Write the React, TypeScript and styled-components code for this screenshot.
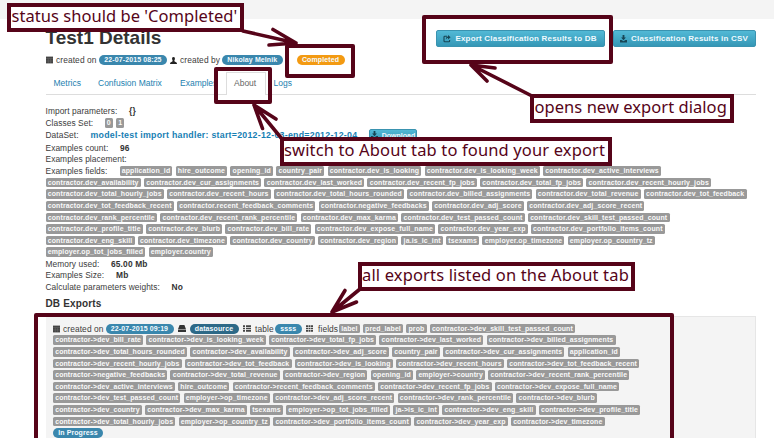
import React from "react";
import styled, { createGlobalStyle } from "styled-components";

const wine = "#560419";

const Global = createGlobalStyle`
  * { box-sizing: border-box; }
  html, body { margin: 0; background: #fff; }
  body { font-family: "Liberation Sans", Arial, sans-serif; font-size: 8.4px; color: #3c3c3c; overflow: hidden; }
`;

const Page = styled.div`
  position: relative;
  width: 774px;
  height: 438px;
  overflow: hidden;
  display: flex;
  flex-direction: column;
`;
const TopBand = styled.div`
  height: 19px;
  flex: none;
  background: #f4f4f4;
`;
const Content = styled.main`
  flex: 1;
  display: flex;
  flex-direction: column;
  padding: 0 18.5px 0 45.5px;
`;
const Header = styled.header`
  height: 33px;
  flex: none;
  display: flex;
  justify-content: space-between;
  align-items: flex-start;
`;
const Title = styled.h1`
  margin: 7.5px 0 0;
  font-size: 19px;
  line-height: 21px;
  font-weight: bold;
  color: #333;
`;
const Actions = styled.div`
  display: flex;
  gap: 8px;
  padding-top: 11px;
`;
const Button = styled.button<{ $w: number; $h?: number; $size?: number; $ls?: number }>`
  display: flex;
  align-items: center;
  justify-content: center;
  gap: 4px;
  flex: none;
  width: ${(p) => p.$w}px;
  height: ${(p) => p.$h ?? 17}px;
  padding: 0;
  border: 1px solid #3a93b0;
  border-radius: 2px;
  background: linear-gradient(#52b9d6, #3597b6);
  color: #effaff;
  font: bold ${(p) => p.$size ?? 8}px "Liberation Sans", Arial, sans-serif;
  letter-spacing: ${(p) => p.$ls ?? 0.2}px;
  white-space: nowrap;
`;
const Meta = styled.div<{ $h: number }>`
  display: flex;
  align-items: center;
  height: ${(p) => p.$h}px;
  flex: none;
  white-space: nowrap;
`;
const MetaText = styled.span<{ $w: number; $ls?: number }>`
  width: ${(p) => p.$w}px;
  flex: none;
  letter-spacing: ${(p) => p.$ls ?? 0.1}px;
`;
const Slot = styled.span<{ $w: number }>`
  width: ${(p) => p.$w}px;
  flex: none;
  display: flex;
  align-items: center;
  justify-content: center;
`;
const Pill = styled.span<{ $w: number; $bg?: string; $ml?: number; $ls?: number }>`
  width: ${(p) => p.$w}px;
  height: 10px;
  flex: none;
  margin-left: ${(p) => p.$ml ?? 0}px;
  border-radius: 5px;
  background: ${(p) => p.$bg ?? "#3a87ad"};
  color: #f4fbff;
  font-size: 7px;
  font-weight: bold;
  line-height: 10px;
  text-align: center;
  letter-spacing: ${(p) => p.$ls ?? 0.1}px;
  white-space: nowrap;
`;
const Tabs = styled.nav`
  display: flex;
  flex: none;
  height: 27px;
  padding-top: 4px;
  border-bottom: 1px solid #ddd;
  font-size: 8.5px;
`;
const Tab = styled.a<{ $w: number; $active?: boolean }>`
  width: ${(p) => p.$w}px;
  height: ${(p) => (p.$active ? 23 : 22)}px;
  flex: none;
  line-height: ${(p) => (p.$active ? 20 : 22)}px;
  padding-left: ${(p) => (p.$active ? 7 : 8)}px;
  color: ${(p) => (p.$active ? "#666" : "#1c7fb0")};
  border: solid #ddd;
  border-width: ${(p) => (p.$active ? "1px 1px 0" : "0")};
  background: #fff;
  white-space: nowrap;
`;
const Params = styled.section`
  display: flex;
  flex-direction: column;
  padding-top: 10.5px;
  flex: none;
`;
const Param = styled.div<{ $h?: number }>`
  display: flex;
  align-items: center;
  height: ${(p) => p.$h ?? 11.6}px;
  white-space: nowrap;
`;
const ParamName = styled.span<{ $w: number }>`
  width: ${(p) => p.$w}px;
  flex: none;
  letter-spacing: 0.06px;
`;
const Value = styled.b`
  color: #333;
  letter-spacing: 0.15px;
`;
const DataLink = styled.a`
  width: 278.5px;
  flex: none;
  color: #1780b4;
  font-size: 8.8px;
  font-weight: bold;
  letter-spacing: 0.26px;
`;
const TagRow = styled.div<{ $ls: number }>`
  display: flex;
  align-items: center;
  gap: 3.2px;
  height: 11.6px;
  letter-spacing: ${(p) => p.$ls}px;
`;
const Tag = styled.span`
  height: 9.6px;
  padding: 0 2.2px;
  border-radius: 1.5px;
  background: #999;
  color: #fafafa;
  font-size: 6.95px;
  font-weight: bold;
  line-height: 9.4px;
  white-space: nowrap;
`;
const SectionTitle = styled.h2`
  margin: 0;
  height: 23px;
  flex: none;
  padding-top: 5px;
  font-size: 10px;
  line-height: 12px;
  letter-spacing: 0.15px;
  color: #333;
`;
const Panel = styled.section`
  flex: 1;
  padding: 6px 6.5px 0;
  background: #f4f4f4;
  border: 1px solid #e6e6e6;
  border-left-color: #f4f4f4;
  border-bottom: 0;
`;

const Callout = styled.div<{ $x: number; $y: number; $w: number; $h: number; $ls?: number }>`
  position: absolute;
  left: ${(p) => p.$x}px;
  top: ${(p) => p.$y}px;
  width: ${(p) => p.$w}px;
  height: ${(p) => p.$h}px;
  padding-left: 0.5px;
  border: 4px solid ${wine};
  background: #fff;
  color: ${wine};
  font: 16.5px "Noto Sans", "Open Sans", sans-serif;
  line-height: 18px;
  letter-spacing: ${(p) => p.$ls ?? 0}px;
  white-space: nowrap;
`;
const Highlight = styled.div<{ $x: number; $y: number; $w: number; $h: number }>`
  position: absolute;
  left: ${(p) => p.$x}px;
  top: ${(p) => p.$y}px;
  width: ${(p) => p.$w}px;
  height: ${(p) => p.$h}px;
  border: 4px solid ${wine};
  border-radius: 2px;
`;
const Arrows = styled.svg`
  position: absolute;
  left: 0;
  top: 0;
  pointer-events: none;
`;

const CalendarIcon = () => (
  <svg width="7" height="8" viewBox="0 0 7 8">
    <path d="M0 .6h7v6.800H0z" fill="#444" />
    <path d="M0 2.500h7M2.300 3v4M4.600 3v4M0 5h7" stroke="#777" strokeWidth=".4" />
  </svg>
);
const UserIcon = () => (
  <svg width="7" height="7" viewBox="0 0 7 7">
    <path d="M3.5 0C4.7 0 5 .8 4.9 2c-.1.9-.5 1.3-.6 1.9.2.8 2.4.9 2.6 2.1V7H.1V6C.3 4.8 2.5 4.7 2.7 3.9 2.6 3.3 2.2 2.9 2.1 2 2 .8 2.3 0 3.5 0z" fill="#222" />
  </svg>
);
const DiskIcon = () => (
  <svg width="8" height="7" viewBox="0 0 8 7">
    <path d="M1.6 0h4.8L8 4.3H0z M0 4.8h8V7H0z" fill="#333" />
  </svg>
);
const ListIcon = () => (
  <svg width="8" height="7" viewBox="0 0 8 7">
    <path d="M0 .3h2v1.6H0zM3 .3h5v1.6H3zM0 2.7h2v1.6H0zM3 2.7h5v1.6H3zM0 5.1h2v1.6H0zM3 5.1h5v1.6H3z" fill="#444" />
  </svg>
);
const GridIcon = () => (
  <svg width="7" height="7" viewBox="0 0 7 7">
    <path d="M0 .3h2v1.6H0zM2.5.3h2v1.6h-2zM5 .3h2v1.6H5zM0 2.7h2v1.6H0zM2.5 2.7h2v1.6h-2zM5 2.7h2v1.6H5zM0 5.1h2v1.6H0zM2.5 5.1h2v1.6h-2zM5 5.1h2v1.6H5z" fill="#444" />
  </svg>
);
const ShareIcon = () => (
  <svg width="8" height="8" viewBox="0 0 8 8">
    <path d="M4 1.2H1.8Q1 1.2 1 2v4q0 .8.8.8h4q.8 0 .8-.8V5" fill="none" stroke="#174554" strokeWidth="1.1" />
    <path d="M5 0l2.6 2.2L5 4.4V3C3.900 3 3.300 3.600 2.900 4.500 2.800 2.500 3.600 1.500 5 1.400z" fill="#174554" />
  </svg>
);
const DownloadIcon = () => (
  <svg width="7" height="8" viewBox="0 0 7 8">
    <path d="M2.6 0h1.8v2.6h1.500L3.500 5.300 1.100 2.600h1.500zM0 5h1.500l2 1.300L5.500 5H7v2.500H0z" fill="#174554" />
  </svg>
);

const fieldRows = [
  "application_id hire_outcome opening_id country_pair contractor.dev_is_looking contractor.dev_is_looking_week contractor.dev_active_interviews",
  "contractor.dev_availability contractor.dev_cur_assignments contractor.dev_last_worked contractor.dev_recent_fp_jobs contractor.dev_total_fp_jobs contractor.dev_recent_hourly_jobs",
  "contractor.dev_total_hourly_jobs contractor.dev_recent_hours contractor.dev_total_hours_rounded contractor.dev_billed_assignments contractor.dev_total_revenue contractor.dev_tot_feedback",
  "contractor.dev_tot_feedback_recent contractor.recent_feedback_comments contractor.negative_feedbacks contractor.dev_adj_score contractor.dev_adj_score_recent",
  "contractor.dev_rank_percentile contractor.dev_recent_rank_percentile contractor.dev_max_karma contractor.dev_test_passed_count contractor.dev_skill_test_passed_count",
  "contractor.dev_profile_title contractor.dev_blurb contractor.dev_bill_rate contractor.dev_expose_full_name contractor.dev_year_exp contractor.dev_portfolio_items_count",
  "contractor.dev_eng_skill contractor.dev_timezone contractor.dev_country contractor.dev_region ja.is_ic_int tsexams employer.op_timezone employer.op_country_tz",
  "employer.op_tot_jobs_filled employer.country",
];

const exportRows = [
  "label pred_label prob contractor->dev_skill_test_passed_count",
  "contractor->dev_bill_rate contractor->dev_is_looking_week contractor->dev_total_fp_jobs contractor->dev_last_worked contractor->dev_billed_assignments",
  "contractor->dev_total_hours_rounded contractor->dev_availability contractor->dev_adj_score country_pair contractor->dev_cur_assignments application_id",
  "contractor->dev_recent_hourly_jobs contractor->dev_tot_feedback contractor->dev_is_looking contractor->dev_recent_hours contractor->dev_tot_feedback_recent",
  "contractor->negative_feedbacks contractor->dev_total_revenue contractor->dev_region opening_id employer->country contractor->dev_recent_rank_percentile",
  "contractor->dev_active_interviews hire_outcome contractor->recent_feedback_comments contractor->dev_recent_fp_jobs contractor->dev_expose_full_name",
  "contractor->dev_test_passed_count employer->op_timezone contractor->dev_adj_score_recent contractor->dev_rank_percentile contractor->dev_blurb",
  "contractor->dev_country contractor->dev_max_karma tsexams employer->op_tot_jobs_filled ja->is_ic_int contractor->dev_eng_skill contractor->dev_profile_title",
  "contractor->dev_total_hourly_jobs employer->op_country_tz contractor->dev_portfolio_items_count contractor->dev_year_exp contractor->dev_timezone",
];

const Tags = ({ names, spacing = 0.11 }: { names: string; spacing?: number }) => (
  <TagRow $ls={spacing}>
    {names.split(" ").map((n) => (
      <Tag key={n}>{n}</Tag>
    ))}
  </TagRow>
);

export default function App() {
  return (
    <Page>
      <Global />
      <TopBand />
      <Content>
        <Header>
          <Title>Test1 Details</Title>
          <Actions>
            <Button $w={169}><ShareIcon />Export Classification Results to DB</Button>
            <Button $w={143}><DownloadIcon />Classification Results in CSV</Button>
          </Actions>
        </Header>
        <Meta $h={16}>
          <Slot $w={7}><CalendarIcon /></Slot>
          <Slot $w={3.5} />
          <MetaText $w={43}>created on</MetaText>
          <Pill $w={68}>22-07-2015 08:25</Pill>
          <Slot $w={13}><UserIcon /></Slot>
          <MetaText $w={42}>created by</MetaText>
          <Pill $w={60.5}>Nikolay Melnik</Pill>
          <Pill $w={48} $bg="#f39a12" $ml={14}>Completed</Pill>
        </Meta>
        <Tabs>
          <Tab $w={44.5}>Metrics</Tab>
          <Tab $w={82}>Confusion Matrix</Tab>
          <Tab $w={54}>Examples</Tab>
          <Tab $w={39.5} $active>About</Tab>
          <Tab $w={40}>Logs</Tab>
        </Tabs>
        <Params>
          <Param><ParamName $w={83.5}>Import parameters:</ParamName><Value>{"{}"}</Value></Param>
          <Param><ParamName $w={59}>Classes Set:</ParamName><Tags names="0 1" /></Param>
          <Param $h={13}>
            <ParamName $w={45}>DataSet:</ParamName>
            <DataLink>model-test import handler: start=2012-12-03-end=2012-12-04</DataLink>
            <Button $w={48} $h={13} $size={7} $ls={0}><DownloadIcon />Download</Button>
          </Param>
          <Param $h={12}><ParamName $w={74.5}>Examples count:</ParamName><Value>96</Value></Param>
          <Param><ParamName $w={74}>Examples placement:</ParamName></Param>
          <Param><ParamName $w={74}>Examples fields:</ParamName><Tags names={fieldRows[0]} spacing={0.138} /></Param>
          {fieldRows.slice(1).map((r) => <Tags key={r} names={r} spacing={0.14} />)}
          <Param><ParamName $w={65.5}>Memory used:</ParamName><Value>65.00 Mb</Value></Param>
          <Param><ParamName $w={70.5}>Examples Size:</ParamName><Value>Mb</Value></Param>
          <Param><ParamName $w={126}>Calculate parameters weights:</ParamName><Value>No</Value></Param>
        </Params>
        <SectionTitle>DB Exports</SectionTitle>
        <Panel>
          <Meta $h={11.6}>
            <Slot $w={7}><CalendarIcon /></Slot>
            <Slot $w={3} />
            <MetaText $w={42.5}>created on</MetaText>
            <Pill $w={68}>22-07-2015 09:19</Pill>
            <Slot $w={16}><DiskIcon /></Slot>
            <Pill $w={49} $bg="#2d6987">datasource</Pill>
            <Slot $w={16.5}><ListIcon /></Slot>
            <MetaText $w={20}>table</MetaText>
            <Pill $w={26.5}>ssss</Pill>
            <Slot $w={16.5}><GridIcon /></Slot>
            <MetaText $w={21}>fields</MetaText>
            <Tags names={exportRows[0]} />
          </Meta>
          {exportRows.slice(1).map((r) => <Tags key={r} names={r} />)}
          <Meta $h={11.6}><Pill $w={50}>In Progress</Pill></Meta>
        </Panel>
      </Content>

      <Highlight $x={285} $y={44} $w={70} $h={34} />
      <Highlight $x={422} $y={15} $w={191} $h={49} />
      <Highlight $x={214} $y={67} $w={58} $h={37} />
      <Highlight $x={34} $y={313} $w={640} $h={140} />
      <Callout $x={7} $y={3} $w={237} $h={29} $ls={0.04}>status should be 'Completed'</Callout>
      <Callout $x={530} $y={94} $w={203.5} $h={29} $ls={0.05}>opens new export dialog</Callout>
      <Callout $x={279.5} $y={137} $w={332.5} $h={29} $ls={0.14}>switch to About tab to found your export</Callout>
      <Callout $x={357.5} $y={262} $w={277.5} $h={29} $ls={0.15}>all exports listed on the About tab</Callout>
      <Arrows width="774" height="438" viewBox="0 0 774 438">
        <g fill="none" stroke={wine} strokeWidth="3.6" strokeLinecap="round" strokeLinejoin="round">
          <path d="M243 31L296 43M273 29.5L296 43L269 45" />
          <path d="M532 96L471 65M487 81L471 65L495 68" />
          <path d="M282 139L254 105M262.5 128.5L254 105L276 119" />
          <path d="M360 289L332 312M345 290.5L332 312L356.5 302" />
        </g>
      </Arrows>
    </Page>
  );
}
